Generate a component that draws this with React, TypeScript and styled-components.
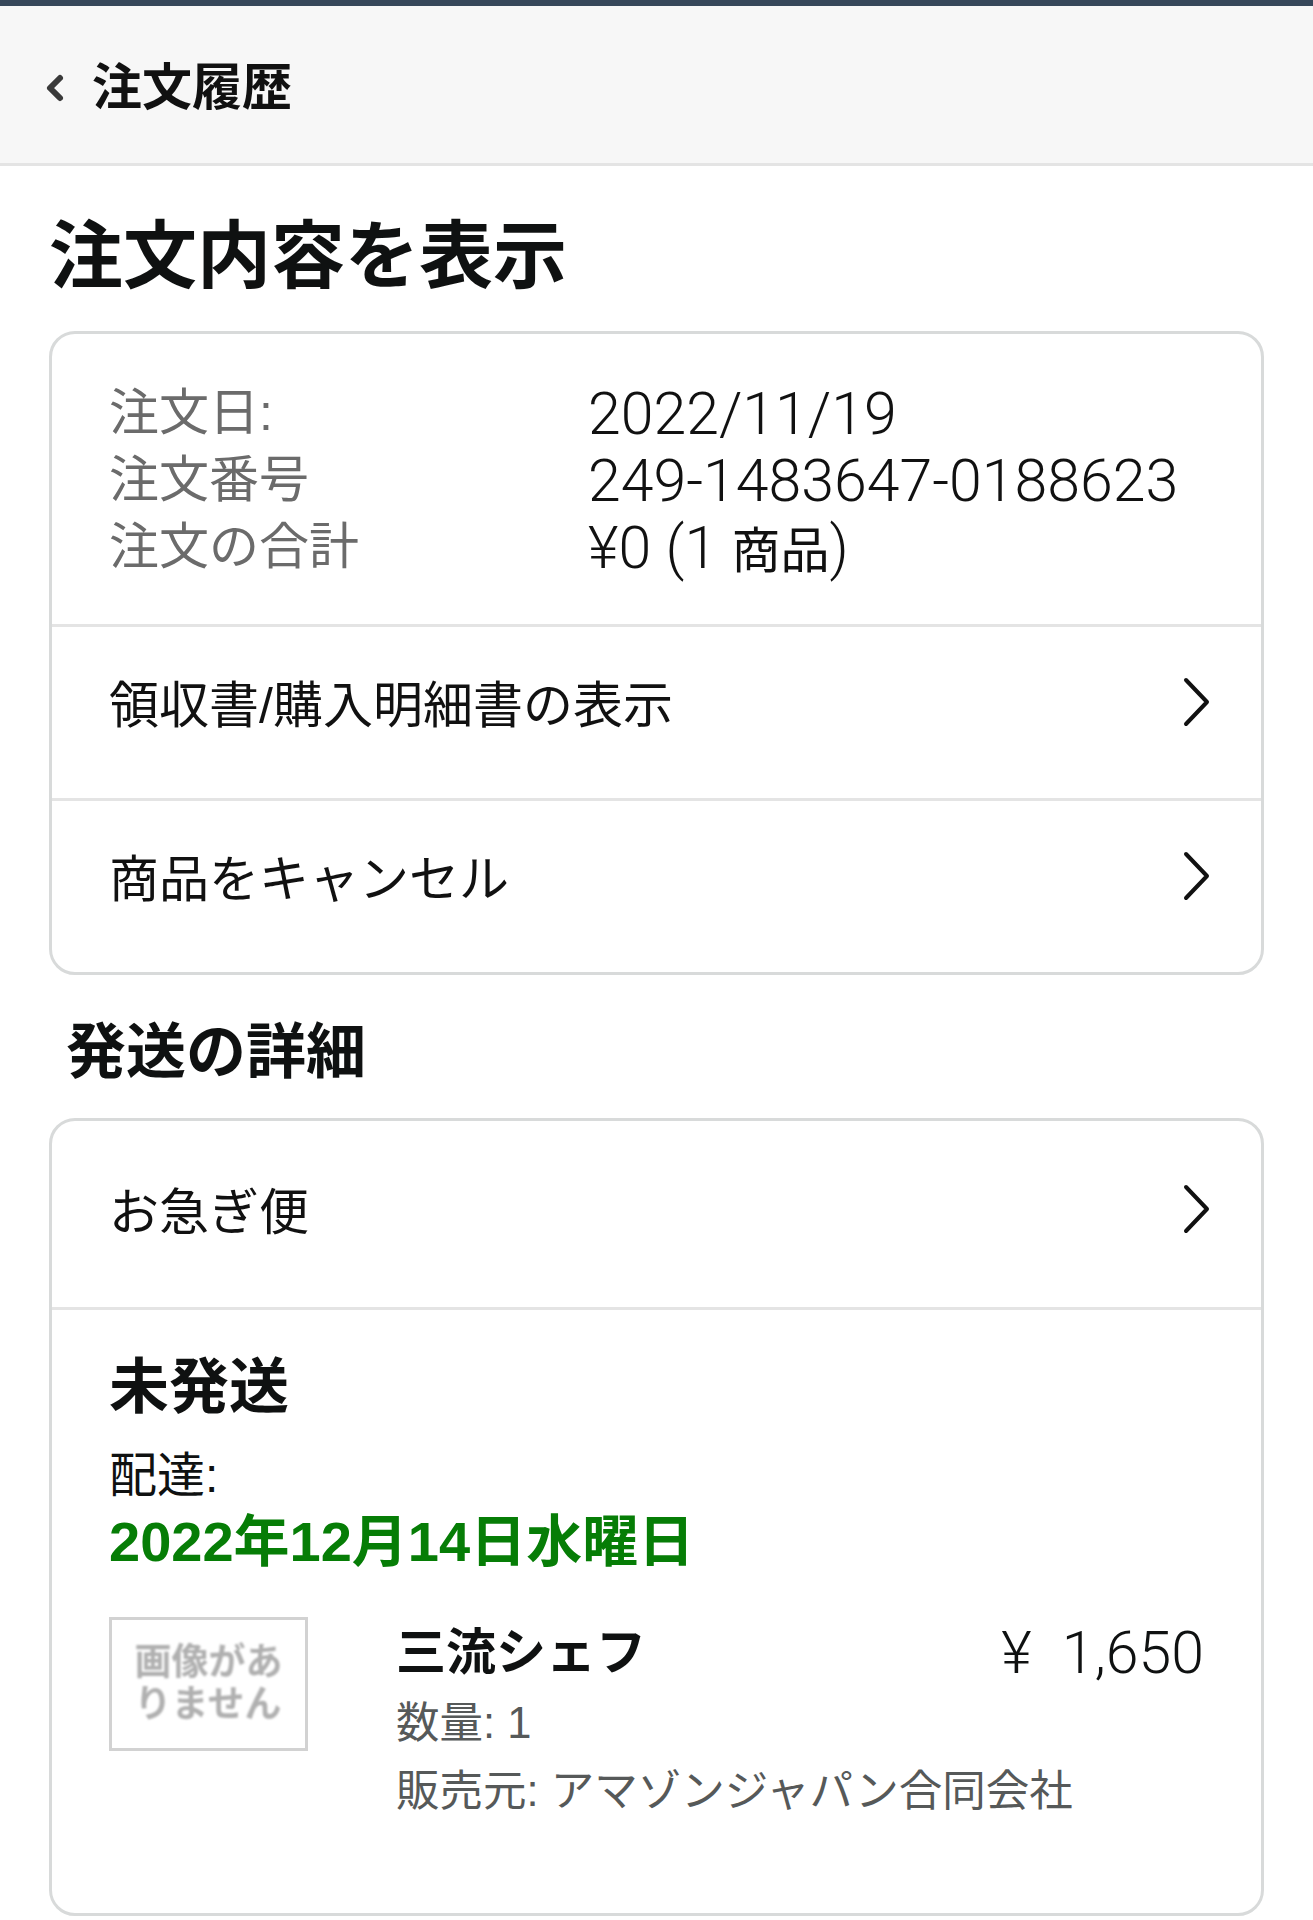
import React from 'react';
import styled, {createGlobalStyle} from 'styled-components';

const GlobalStyle = createGlobalStyle`
  html, body {
    margin: 0;
    padding: 0;
    background: #ffffff;
  }
  body {
    font-family: "Liberation Sans", "Noto Sans CJK JP", sans-serif;
    color: #0f1111;
  }
  * {
    box-sizing: border-box;
  }
`;

const orderInfo = [
  {label: '注文日:', value: '2022/11/19'},
  {label: '注文番号', value: '249-1483647-0188623'},
];

const ChevronRight: React.FC = () => (
  <ChevronIcon width="30" height="52" viewBox="0 0 30 52">
    <polyline points="5,5 26,27 5,49" fill="none" stroke="#111" strokeWidth="4" strokeLinecap="round" strokeLinejoin="round"/>
  </ChevronIcon>
);

const App: React.FC = () => {
  return (
    <Page>
      <GlobalStyle/>
      <TopBar/>
      <Header>
        <BackIcon width="22" height="32" viewBox="0 0 22 32">
          <polyline points="16,6 6,16 16,26" fill="none" stroke="#3a3a3a" strokeWidth="6" strokeLinecap="round" strokeLinejoin="round"/>
        </BackIcon>
        <HeaderTitle>注文履歴</HeaderTitle>
      </Header>

      <Main>
        <PageTitle>注文内容を表示</PageTitle>

        <Card>
          <InfoBlock>
            {orderInfo.map(row => (
              <React.Fragment key={row.label}>
                <InfoLabel>{row.label}</InfoLabel>
                <InfoValue>{row.value}</InfoValue>
              </React.Fragment>
            ))}
            <InfoLabel>注文の合計</InfoLabel>
            <InfoValue>¥0 (1 <JpText>商品</JpText>)</InfoValue>
          </InfoBlock>
          <LinkRow $height={174} $lift={14} $divider>
            <RowText>領収書/購入明細書の表示</RowText>
            <ChevronRight/>
          </LinkRow>
          <LinkRow $height={174} $lift={14} $divider>
            <RowText>商品をキャンセル</RowText>
            <ChevronRight/>
          </LinkRow>
        </Card>

        <SectionTitle>発送の詳細</SectionTitle>

        <Card>
          <LinkRow $height={186} $lift={2}>
            <RowText>お急ぎ便</RowText>
            <ChevronRight/>
          </LinkRow>
          <ShipmentBlock>
            <Status>未発送</Status>
            <DeliveryLabel>配達:</DeliveryLabel>
            <DeliveryDate>2022年12月14日水曜日</DeliveryDate>

            <ProductRow>
              <Placeholder>
                <PlaceholderText>画像があ<br/>りません</PlaceholderText>
              </Placeholder>
              <ProductInfo>
                <ProductTop>
                  <ProductName>三流シェフ</ProductName>
                  <Price><Currency>¥</Currency>1,650</Price>
                </ProductTop>
                <ProductMeta>数量: 1</ProductMeta>
                <ProductMeta>販売元: アマゾンジャパン合同会社</ProductMeta>
              </ProductInfo>
            </ProductRow>
          </ShipmentBlock>
        </Card>
      </Main>
    </Page>
  );
};

const Page = styled.div`
  width: 100%;
  min-height: 1920px;
  background: #ffffff;
`;

const TopBar = styled.div`
  height: 6px;
  background: #37475a;
`;

const Header = styled.header`
  height: 160px;
  padding: 6px 0 0 44px;
  display: flex;
  align-items: center;
  gap: 26px;
  background: #f7f7f7;
  border-bottom: 3px solid #e4e4e4;
`;

const BackIcon = styled.svg`
  flex-shrink: 0;
`;

const HeaderTitle = styled.div`
  font-size: 50px;
  font-weight: 700;
  line-height: 60px;
  color: #111;
`;

const Main = styled.main`
  padding: 0 49px;
`;

const PageTitle = styled.h1`
  margin: 46px 0 29px;
  font-size: 74px;
  font-weight: 700;
  line-height: 90px;
  color: #0f1111;
`;

const Card = styled.section`
  border: 3px solid #d8dada;
  border-radius: 26px;
  background: #ffffff;
  overflow: hidden;
`;

const InfoBlock = styled.div`
  display: grid;
  grid-template-columns: 479px 1fr;
  padding: 46px 57px 39px;
`;

const InfoLabel = styled.div`
  font-size: 50px;
  line-height: 67px;
  color: #6b6b6b;
`;

const InfoValue = styled.div`
  font-family: "Roboto", "Noto Sans CJK JP", sans-serif;
  font-size: 59px;
  font-weight: 300;
  line-height: 67px;
  color: #111;
  white-space: nowrap;
`;

const JpText = styled.span`
  font-size: 49px;
  font-weight: 400;
`;

const LinkRow = styled.div<{ $height: number; $lift: number; $divider?: boolean }>`
  height: ${p => p.$height}px;
  padding: 0 50px ${p => p.$lift}px 57px;
  display: flex;
  align-items: center;
  justify-content: space-between;
  border-top: ${p => (p.$divider ? '3px solid #e4e4e4' : 'none')};
`;

const RowText = styled.div`
  font-size: 50px;
  line-height: 64px;
  color: #111;
`;

const ChevronIcon = styled.svg`
  flex-shrink: 0;
  margin-bottom: 10px;
`;

const SectionTitle = styled.h2`
  margin: 38px 0 25px 17px;
  font-size: 60px;
  font-weight: 700;
  line-height: 80px;
  color: #0f1111;
`;

const ShipmentBlock = styled.div`
  border-top: 3px solid #e4e4e4;
  padding: 40px 57px 88px;
`;

const Status = styled.div`
  font-size: 60px;
  font-weight: 700;
  line-height: 76px;
  color: #0f1111;
`;

const DeliveryLabel = styled.div`
  margin-top: 18px;
  font-size: 48px;
  line-height: 64px;
  color: #0f1111;
`;

const DeliveryDate = styled.div`
  margin-top: 2px;
  font-size: 56px;
  font-weight: 700;
  line-height: 64px;
  color: #067d06;
`;

const ProductRow = styled.div`
  margin-top: 43px;
  display: flex;
  align-items: flex-start;
  gap: 88px;
`;

const Placeholder = styled.div`
  flex-shrink: 0;
  width: 199px;
  height: 134px;
  border: 3px solid #d2d2d2;
  display: flex;
  align-items: center;
  justify-content: center;
`;

const PlaceholderText = styled.div`
  font-size: 37px;
  font-weight: 700;
  line-height: 42px;
  color: #b0b0b0;
  filter: blur(1.2px);
  text-align: left;
`;

const ProductInfo = styled.div`
  flex: 1;
  min-width: 0;
`;

const ProductTop = styled.div`
  display: flex;
  align-items: center;
  justify-content: space-between;
  height: 72px;
`;

const ProductName = styled.div`
  font-size: 50px;
  font-weight: 700;
  line-height: 72px;
  color: #0f1111;
`;

const Price = styled.div`
  font-family: "Roboto", "Noto Sans CJK JP", sans-serif;
  font-size: 59px;
  font-weight: 300;
  line-height: 72px;
  color: #0f1111;
  white-space: nowrap;
`;

const Currency = styled.span`
  margin-right: 30px;
`;

const ProductMeta = styled.div`
  font-size: 43.5px;
  line-height: 68px;
  color: #565959;
  white-space: nowrap;
`;

export default App;
